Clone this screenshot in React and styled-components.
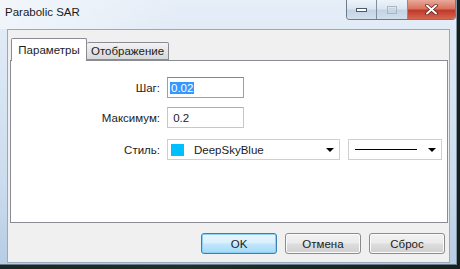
import React from "react";
import styled, { createGlobalStyle } from "styled-components";

const GlobalStyle = createGlobalStyle`
  html, body { margin: 0; padding: 0; }
  body {
    width: 460px;
    height: 269px;
    overflow: hidden;
    background: linear-gradient(to right, #1b2724, #20302b 40%, #16211e);
    font-family: "Liberation Sans", Arial, sans-serif;
    font-size: 11.5px;
    color: #1c1c1c;
  }
`;

const Window = styled.div`
  width: 457px;
  height: 265px;
  box-sizing: border-box;
  display: flex;
  flex-direction: column;
  background: linear-gradient(to bottom, #e6eef8 0%, #d9e6f3 30%, #cbdcee 70%, #b6cde4 100%);
  border-right: 1px solid #8796a6;
  border-bottom: 1px solid #6b7a88;
`;

const TitleBar = styled.div`
  height: 29px;
  flex-shrink: 0;
  display: flex;
  align-items: flex-start;
  background: linear-gradient(to right, rgba(255, 255, 255, 0.5), rgba(255, 255, 255, 0) 40%);
`;

const Title = styled.div`
  padding: 5px 0 0 5px;
  font-size: 11.5px;
  line-height: 14px;
  color: #1a1a1a;
`;

const Caption = styled.div`
  margin-left: auto;
  display: flex;
  height: 19px;
  border: 1px solid #6c7b8c;
  border-top: none;
  border-radius: 0 0 4px 4px;
  overflow: hidden;
`;

const CapButton = styled.div`
  width: ${(p) => p.$w}px;
  height: 100%;
  display: flex;
  align-items: center;
  justify-content: center;
  border-left: ${(p) => (p.$first ? "none" : "1px solid #7f8d9c")};
  background: ${(p) =>
    p.$close
      ? "linear-gradient(to bottom, #e9a99c 0%, #d9735f 45%, #c0392a 55%, #d5664f 100%)"
      : "linear-gradient(to bottom, #edf3f9 0%, #dbe6f1 45%, #c4d4e4 55%, #d2dfec 100%)"};
`;

const Client = styled.div`
  flex: 1;
  margin: 0 6px 1px 7px;
  background: #f0f0f0;
  border: 1px solid #98a9bb;
  display: flex;
  flex-direction: column;
  padding: 8px 1px 0 2px;
`;

const Tabs = styled.div`
  display: flex;
  align-items: flex-end;
  height: 22px;
  padding-left: 1px;
  position: relative;
  z-index: 1;
`;

const Tab = styled.div`
  box-sizing: border-box;
  height: ${(p) => (p.$active ? 23 : 18)}px;
  width: ${(p) => p.$w}px;
  justify-content: center;
  margin-bottom: ${(p) => (p.$active ? -1 : 0)}px;
  display: flex;
  align-items: center;
  padding-bottom: ${(p) => (p.$active ? 1 : 0)}px;
  border: 1px solid #898c95;
  border-bottom: ${(p) => (p.$active ? "none" : "1px solid #898c95")};
  border-left: ${(p) => (p.$active ? "1px solid #898c95" : "none")};
  border-radius: 2px 2px 0 0;
  background: ${(p) =>
    p.$active ? "#fff" : "linear-gradient(to bottom, #f3f3f3, #e5e5e5 50%, #d9d9d9)"};
`;

const Panel = styled.div`
  height: 163px;
  box-sizing: border-box;
  background: #fff;
  border: 1px solid #898c95;
  padding-top: 16px;
`;

const Form = styled.div`
  display: grid;
  grid-template-columns: 149px auto;
  column-gap: 7px;
  row-gap: 9px;
  align-items: center;
`;

const Label = styled.div`
  text-align: right;
  margin-top: ${(p) => p.$mt || 0}px;
`;

const Input = styled.div`
  width: 77px;
  height: 21px;
  box-sizing: border-box;
  border: 1px solid ${(p) => (p.$focus ? "#7ea7cf" : "#c3c8ce")};
  border-top-color: ${(p) => (p.$focus ? "#5d8ebd" : "#abadb3")};
  display: flex;
  align-items: center;
  padding-left: 2px;
`;

const Selected = styled.span`
  background: #3399ff;
  color: #fff;
  padding: 0 1px;
  line-height: 12px;
`;

const SelectRow = styled.div`
  display: flex;
  gap: 8px;
  margin-top: ${(p) => p.$mt || 0}px;
`;

const Select = styled.div`
  width: ${(p) => p.$w}px;
  height: 21px;
  box-sizing: border-box;
  border: 1px solid #cfcfcf;
  background: #fff;
  display: flex;
  align-items: center;
  padding: 0 5px 0 2px;
`;

const Swatch = styled.span`
  width: 13px;
  height: 12px;
  background: #00bfff;
  margin: 0 10px 0 1px;
`;

const Line = styled.span`
  width: 62px;
  height: 1px;
  background: #000;
  margin-left: 4px;
`;

const Arrow = styled.span`
  margin-left: auto;
  width: 0;
  height: 0;
  border-left: 4px solid transparent;
  border-right: 4px solid transparent;
  border-top: 4px solid #000;
`;

const ButtonRow = styled.div`
  display: flex;
  justify-content: flex-end;
  gap: 8px;
  margin-top: 10px;
  padding-right: 3px;
`;

const Button = styled.div`
  width: 76px;
  height: 21px;
  box-sizing: border-box;
  border: 1px solid ${(p) => (p.$default ? "#3c7fb1" : "#8c8c8c")};
  border-radius: 3px;
  display: flex;
  align-items: center;
  justify-content: center;
  background: ${(p) =>
    p.$default
      ? "linear-gradient(to bottom, #eaf6fd 0%, #d9f0fc 45%, #bee6fd 55%, #a7d9f5 100%)"
      : "linear-gradient(to bottom, #f2f2f2 0%, #ebebeb 45%, #dddddd 55%, #cfcfcf 100%)"};
  box-shadow: ${(p) => (p.$default ? "inset 0 0 0 1px #8fd0f5" : "inset 0 0 0 1px #fbfbfb")};
`;

export default function App() {
  return (
    <>
      <GlobalStyle />
      <Window>
        <TitleBar>
          <Title>Parabolic SAR</Title>
          <Caption>
            <CapButton $w={29} $first>
              <svg width="11" height="4" viewBox="0 0 11 4">
                <rect x="0.5" y="0.5" width="10" height="3" fill="#fff" stroke="#4a5a6b" />
              </svg>
            </CapButton>
            <CapButton $w={30}>
              <svg width="10" height="8" viewBox="0 0 10 8">
                <rect x="0.5" y="0.5" width="9" height="7" fill="none" stroke="#a9b7c5" />
                <rect x="2.5" y="2.5" width="5" height="3" fill="none" stroke="#c9d4de" />
              </svg>
            </CapButton>
            <CapButton $w={47} $close>
              <svg width="13" height="11" viewBox="0 0 13 11">
                <path d="M2 1.5 L11 9.5 M11 1.5 L2 9.5" stroke="#5a1a12" strokeWidth="3.4" strokeLinecap="round" />
                <path d="M2 1.5 L11 9.5 M11 1.5 L2 9.5" stroke="#fff" strokeWidth="2" strokeLinecap="round" />
              </svg>
            </CapButton>
          </Caption>
        </TitleBar>
        <Client>
          <Tabs>
            <Tab $active $w={76}>Параметры</Tab>
            <Tab $w={82}>Отображение</Tab>
          </Tabs>
          <Panel>
            <Form>
              <Label>Шаг:</Label>
              <Input $focus>
                <Selected>0.02</Selected>
              </Input>
              <Label>Максимум:</Label>
              <Input>&nbsp;0.2</Input>
              <Label $mt={2}>Стиль:</Label>
              <SelectRow $mt={2}>
                <Select $w={173}>
                  <Swatch />
                  DeepSkyBlue
                  <Arrow />
                </Select>
                <Select $w={94}>
                  <Line />
                  <Arrow />
                </Select>
              </SelectRow>
            </Form>
          </Panel>
          <ButtonRow>
            <Button $default>OK</Button>
            <Button>Отмена</Button>
            <Button>Сброс</Button>
          </ButtonRow>
        </Client>
      </Window>
    </>
  );
}
